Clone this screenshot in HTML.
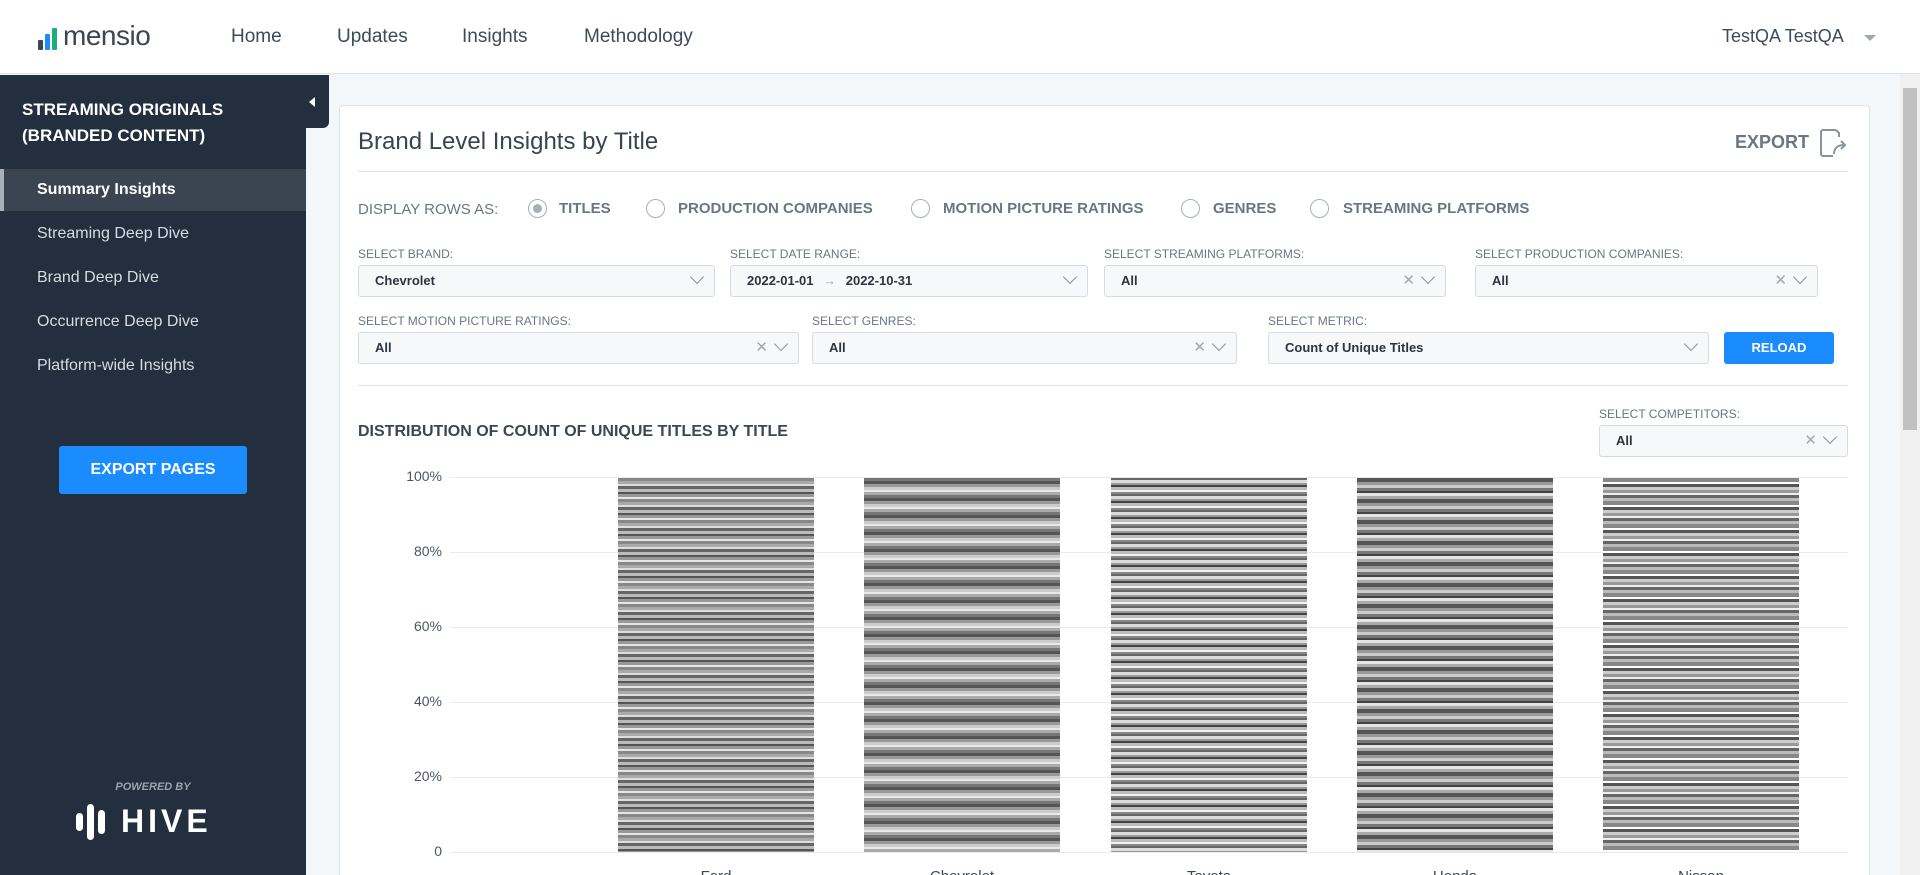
<!DOCTYPE html>
<html style="width:1920px;height:875px;overflow:hidden"><head><meta charset="utf-8"><style>
*{box-sizing:border-box;margin:0;padding:0}
body{width:1920px;height:875px;overflow:hidden;font-family:"Liberation Sans",sans-serif;background:#f4f7fa;position:relative}
.hdr{position:absolute;left:0;top:0;width:1920px;height:74px;background:#fff;border-bottom:1px solid #dde3ea}
.logo{position:absolute;left:38px;top:22px;display:flex;align-items:flex-end}
.logo .b{width:5px;margin-right:2px;border-radius:1px}
.logo span{font-size:28px;color:#3d4652;margin-left:4px;line-height:28px;letter-spacing:-0.5px}
.nav{position:absolute;top:26px;font-size:19px;color:#3d4a5a}
.user{position:absolute;left:1722px;top:26px;font-size:18px;color:#3d4a5a}
.caret{position:absolute;left:1864px;top:35px;border:6px solid transparent;border-top:6px solid #a0a8b2}
.side{position:absolute;left:0;top:75px;width:306px;height:800px;background:#232f3e}
.tab{position:absolute;left:296px;top:75px;width:33px;height:53px;background:#232f3e;border-radius:0 0 6px 0}
.tab:after{content:"";position:absolute;left:13px;top:22px;border:5px solid transparent;border-right:6px solid #fff;border-left:0}
.stitle{position:absolute;left:22px;top:97px;color:#fff;font-weight:bold;font-size:17px;line-height:26px}
.mi{position:absolute;left:0;width:306px;height:42px;line-height:42px;padding-left:37px;color:#d6dbe2;font-size:16px}
.mi.act{background:#3a4551;color:#fff;font-weight:bold;border-left:4px solid #a8b0ba;padding-left:33px}
.exbtn{position:absolute;left:59px;top:446px;width:188px;height:48px;background:#1a8cff;color:#fff;font-weight:bold;font-size:16px;text-align:center;line-height:48px;border-radius:3px}
.pb{position:absolute;left:0;width:306px;top:781px;text-align:center;color:#9aa3ad;font-size:11px;font-style:italic;font-weight:bold}
.hive{position:absolute;left:76px;top:803px;display:flex;align-items:center}
.hive i{display:block;background:#fff;border-radius:4px;margin-right:4px}
.hive span{color:#fff;font-weight:bold;font-size:32px;letter-spacing:4px;margin-left:12px}
.card{position:absolute;left:339px;top:105px;width:1531px;height:780px;background:#fff;border:1px solid #dfe4ea;border-radius:4px}
.title{position:absolute;left:358px;top:128px;font-size:24px;color:#3a4350}
.hr{position:absolute;height:1px;background:#dbe0e6;left:358px;width:1490px}
.exp{position:absolute;left:1735px;top:132px;font-size:18px;font-weight:bold;color:#6a7684}
.radrow{position:absolute;top:199px;font-size:15px;color:#6a7684}
.rad{position:absolute;top:199px;width:19px;height:19px;border:1px solid #a7b0ba;border-radius:50%}
.rad.on:after{content:"";position:absolute;left:4px;top:4px;width:9px;height:9px;border-radius:50%;background:#a7b0ba}
.rl{position:absolute;top:200px;font-size:15px;font-weight:bold;color:#6a7684}
.lab{position:absolute;font-size:12px;color:#6a7684}
.sel{position:absolute;height:32px;background:#f6f8fa;border:1px solid #d5dbe1;border-radius:3px;font-size:13px;font-weight:bold;color:#2d3540;line-height:30px;padding-left:16px}
.sel .ic{position:absolute;right:12px;top:0;color:#a0a8b2;font-weight:normal;font-size:15px}
.chv{display:inline-block;width:10px;height:10px;border-right:1.5px solid #8a939d;border-bottom:1.5px solid #8a939d;transform:rotate(45deg);margin-left:8px;position:relative;top:-3px}
.reload{position:absolute;left:1724px;top:332px;width:110px;height:32px;background:#1a8cff;color:#fff;border-radius:3px;font-weight:bold;font-size:13px;text-align:center;line-height:32px}
.ct{position:absolute;left:358px;top:423px;font-size:16px;color:#3d4652;font-weight:bold}
.yl{position:absolute;width:86px;left:356px;text-align:right;font-size:14px;color:#4a5562}
.gl{position:absolute;left:450px;width:1398px;height:1px;background:#e8ebf0}
.bar{position:absolute;top:478px;height:374px;width:196px}
.xl{position:absolute;top:868px;font-size:15px;color:#3d4652;width:196px;text-align:center}
.sb{position:absolute;left:1900px;top:74px;width:20px;height:801px;background:#f1f1f1}
.sb div{position:absolute;left:3px;top:14px;width:14px;height:342px;background:#c1c1c1}
</style></head><body>
<div class="hdr">
 <div class="logo"><div class="b" style="height:10px;background:#3d4652"></div><div class="b" style="height:16px;background:#1a8cff"></div><div class="b" style="height:22px;background:#19b07e"></div><span>mensio</span></div>
 <div class="nav" style="left:231px">Home</div>
 <div class="nav" style="left:337px">Updates</div>
 <div class="nav" style="left:462px">Insights</div>
 <div class="nav" style="left:584px">Methodology</div>
 <div class="user">TestQA TestQA</div><div class="caret"></div>
</div>
<div class="side"></div><div class="tab"></div>
<div class="stitle">STREAMING ORIGINALS<br>(BRANDED CONTENT)</div>
<div class="mi act" style="top:169px">Summary Insights</div>
<div class="mi" style="top:213px">Streaming Deep Dive</div>
<div class="mi" style="top:257px">Brand Deep Dive</div>
<div class="mi" style="top:301px">Occurrence Deep Dive</div>
<div class="mi" style="top:345px">Platform-wide Insights</div>
<div class="exbtn">EXPORT PAGES</div>
<div class="pb">POWERED BY</div>
<div class="hive"><i style="width:7px;height:18px"></i><i style="width:7px;height:36px"></i><i style="width:7px;height:24px"></i><span>HIVE</span></div>
<div class="sb"><div></div></div>
<div class="card"></div>
<div class="title">Brand Level Insights by Title</div>
<div class="exp">EXPORT</div>
<svg style="position:absolute;left:1817px;top:127px" width="32" height="32" viewBox="0 0 32 32"><path d="M19 3H6a2 2 0 0 0-2 2v22a2 2 0 0 0 2 2h10M19 3l3 3v4" fill="none" stroke="#8a939d" stroke-width="2"/><path d="M17 27c0-6 4-9 10-9M24 14l4 4-4 4" fill="none" stroke="#8a939d" stroke-width="2"/></svg>
<div class="hr" style="top:171px"></div>
<div class="radrow" style="left:358px;top:201px">DISPLAY ROWS AS:</div>
<div class="rad on" style="left:528px"></div><div class="rl" style="left:559px">TITLES</div>
<div class="rad" style="left:646px"></div><div class="rl" style="left:678px">PRODUCTION COMPANIES</div>
<div class="rad" style="left:911px"></div><div class="rl" style="left:943px">MOTION PICTURE RATINGS</div>
<div class="rad" style="left:1181px"></div><div class="rl" style="left:1213px">GENRES</div>
<div class="rad" style="left:1310px"></div><div class="rl" style="left:1343px">STREAMING PLATFORMS</div>
<div class="lab" style="left:358px;top:247px">SELECT BRAND:</div>
<div class="lab" style="left:730px;top:247px">SELECT DATE RANGE:</div>
<div class="lab" style="left:1104px;top:247px">SELECT STREAMING PLATFORMS:</div>
<div class="lab" style="left:1475px;top:247px">SELECT PRODUCTION COMPANIES:</div>
<div class="sel" style="left:358px;top:265px;width:357px">Chevrolet<span class="ic"><span class="chv"></span></span></div>
<div class="sel" style="left:730px;top:265px;width:358px">2022-01-01 <span style="color:#a0a8b2;font-weight:normal;margin:0 6px">→</span> 2022-10-31<span class="ic"><span class="chv"></span></span></div>
<div class="sel" style="left:1104px;top:265px;width:342px">All<span class="ic">✕<span class="chv"></span></span></div>
<div class="sel" style="left:1475px;top:265px;width:343px">All<span class="ic">✕<span class="chv"></span></span></div>
<div class="lab" style="left:358px;top:314px">SELECT MOTION PICTURE RATINGS:</div>
<div class="lab" style="left:812px;top:314px">SELECT GENRES:</div>
<div class="lab" style="left:1268px;top:314px">SELECT METRIC:</div>
<div class="sel" style="left:358px;top:332px;width:441px">All<span class="ic">✕<span class="chv"></span></span></div>
<div class="sel" style="left:812px;top:332px;width:425px">All<span class="ic">✕<span class="chv"></span></span></div>
<div class="sel" style="left:1268px;top:332px;width:441px">Count of Unique Titles<span class="ic"><span class="chv"></span></span></div>
<div class="reload">RELOAD</div>
<div class="hr" style="top:385px"></div>
<div class="ct">DISTRIBUTION OF COUNT OF UNIQUE TITLES BY TITLE</div>
<div class="lab" style="left:1599px;top:407px">SELECT COMPETITORS:</div>
<div class="sel" style="left:1599px;top:425px;width:249px">All<span class="ic">✕<span class="chv"></span></span></div>
<div class="gl" style="top:477px"></div><div class="gl" style="top:552px"></div><div class="gl" style="top:627px"></div><div class="gl" style="top:702px"></div><div class="gl" style="top:777px"></div><div class="gl" style="top:852px"></div>
<div class="yl" style="top:468px">100%</div><div class="yl" style="top:543px">80%</div><div class="yl" style="top:618px">60%</div><div class="yl" style="top:693px">40%</div><div class="yl" style="top:768px">20%</div><div class="yl" style="top:843px">0</div>
<div class="bar" style="left:618px;background:repeating-linear-gradient(#888 0 3px,#aaa 3px 6px,#ddd 6px 8px,#666 8px 11px,#bbb 11px 14px,#555 14px 16px,#999 16px 19px,#e5e5e5 19px 21px)"></div>
<div class="bar" style="left:864px;background:repeating-linear-gradient(#777 0 3px,#555 3px 6px,#999 6px 9px,#ccc 9px 12px,#e8e8e8 12px 14px,#aaa 14px 17px)"></div>
<div class="bar" style="left:1111px;background:repeating-linear-gradient(#666 0 2px,#ddd 2px 5px,#999 5px 7px,#444 7px 9px,#bbb 9px 12px,#f0f0f0 12px 14px,#888 14px 16px)"></div>
<div class="bar" style="left:1357px;background:repeating-linear-gradient(#555 0 4px,#999 4px 7px,#ccc 7px 10px,#777 10px 13px,#444 13px 15px,#e5e5e5 15px 18px,#aaa 18px 21px)"></div>
<div class="bar" style="left:1603px;background:repeating-linear-gradient(#888 0 4px,#fff 4px 6px,#555 6px 9px,#ccc 9px 12px,#999 12px 15px,#eee 15px 17px,#666 17px 20px,#bbb 20px 23px)"></div>
<div class="xl" style="left:618px">Ford</div><div class="xl" style="left:864px">Chevrolet</div><div class="xl" style="left:1111px">Toyota</div><div class="xl" style="left:1357px">Honda</div><div class="xl" style="left:1603px">Nissan</div>
</body></html>
